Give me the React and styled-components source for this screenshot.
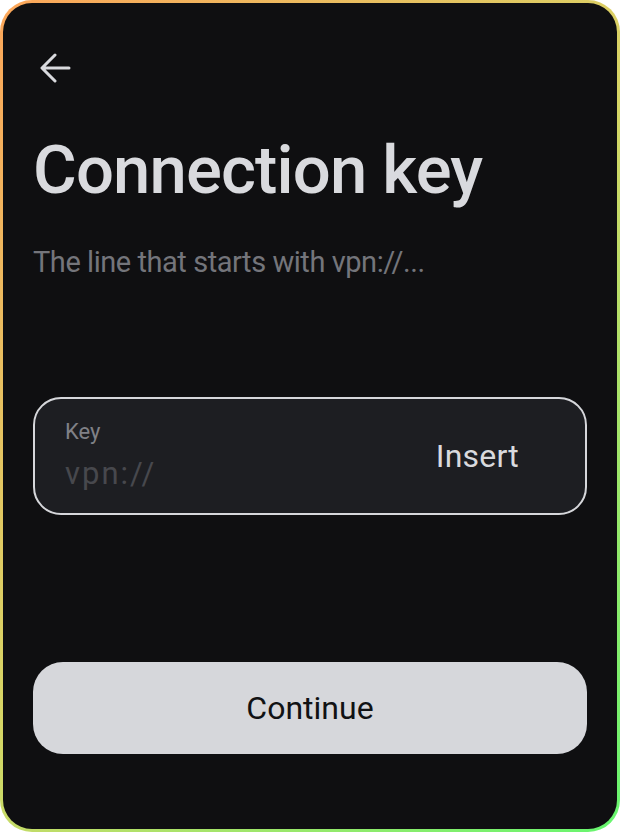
import React from 'react';
import styled, { createGlobalStyle } from 'styled-components';

const GlobalStyle = createGlobalStyle`
    html, body {
        margin: 0;
        padding: 0;
        background: #ffffff;
    }
    * {
        box-sizing: border-box;
    }
`;

const Frame = styled.div`
    width: 620px;
    height: 832px;
    padding: 3px;
    border-radius: 32px;
    background: linear-gradient(135deg, #fca65a 0%, #d6d666 50%, #66f66f 100%);
`;

const Screen = styled.main`
    height: 100%;
    border-radius: 29px;
    background: #0f0f11;
    padding: 49px 30px 0;
    display: flex;
    flex-direction: column;
    font-family: Roboto, 'Noto Sans', sans-serif;
`;

const BackButton = styled.button`
    width: 32px;
    height: 32px;
    padding: 0;
    margin-left: 7px;
    border: none;
    background: transparent;
    color: #d9dade;
    cursor: pointer;
    display: flex;
    svg {
        display: block;
    }
`;

const Title = styled.h1`
    margin: 46px 0 0;
    font-size: 67px;
    line-height: 80px;
    font-weight: 500;
    letter-spacing: -0.85px;
    color: #d9dade;
`;

const Subtitle = styled.p`
    margin: 34px 0 0;
    font-size: 29px;
    line-height: 36px;
    font-weight: 400;
    letter-spacing: -0.45px;
    color: #74757b;
`;

const Field = styled.label`
    margin-top: 117px;
    height: 118px;
    border: 2px solid #d6d7db;
    border-radius: 28px;
    background: #1d1e22;
    display: flex;
    align-items: center;
    padding: 0 66px 0 30px;
`;

const FieldBody = styled.div`
    flex: 1;
    display: flex;
    flex-direction: column;
    gap: 11px;
    margin-top: -1px;
`;

const FieldLabel = styled.span`
    font-size: 22px;
    line-height: 26px;
    letter-spacing: 0;
    color: #808187;
`;

const KeyInput = styled.input`
    width: 100%;
    padding: 0;
    border: none;
    outline: none;
    background: transparent;
    font-family: inherit;
    font-size: 31px;
    line-height: 36px;
    letter-spacing: 2px;
    color: #d9dade;
    &::placeholder {
        color: #47484d;
    }
`;

const InsertButton = styled.button`
    padding: 0;
    border: none;
    background: transparent;
    font-family: inherit;
    font-size: 32px;
    letter-spacing: 0.2px;
    color: #d9dade;
    cursor: pointer;
`;

const ContinueButton = styled.button`
    margin-top: 147px;
    height: 92px;
    border: none;
    border-radius: 30px;
    background: #d6d7db;
    font-family: inherit;
    font-size: 32px;
    letter-spacing: 0;
    color: #111214;
    cursor: pointer;
`;

const ArrowLeft = () => (
    <svg width='32' height='32' viewBox='0 0 32 32' fill='none'>
        <path
            d='M15 3 2 16l13 13M2.5 16H29'
            stroke='currentColor'
            strokeWidth='3'
            strokeLinecap='round'
            strokeLinejoin='round'
        />
    </svg>
);

const App = () => {
    return (
        <>
            <GlobalStyle />
            <Frame>
                <Screen>
                    <BackButton type='button' aria-label='Back'>
                        <ArrowLeft />
                    </BackButton>
                    <Title>Connection key</Title>
                    <Subtitle>The line that starts with vpn://...</Subtitle>
                    <Field>
                        <FieldBody>
                            <FieldLabel>Key</FieldLabel>
                            <KeyInput placeholder='vpn://' />
                        </FieldBody>
                        <InsertButton type='button'>Insert</InsertButton>
                    </Field>
                    <ContinueButton type='button'>Continue</ContinueButton>
                </Screen>
            </Frame>
        </>
    );
};

export default App;
